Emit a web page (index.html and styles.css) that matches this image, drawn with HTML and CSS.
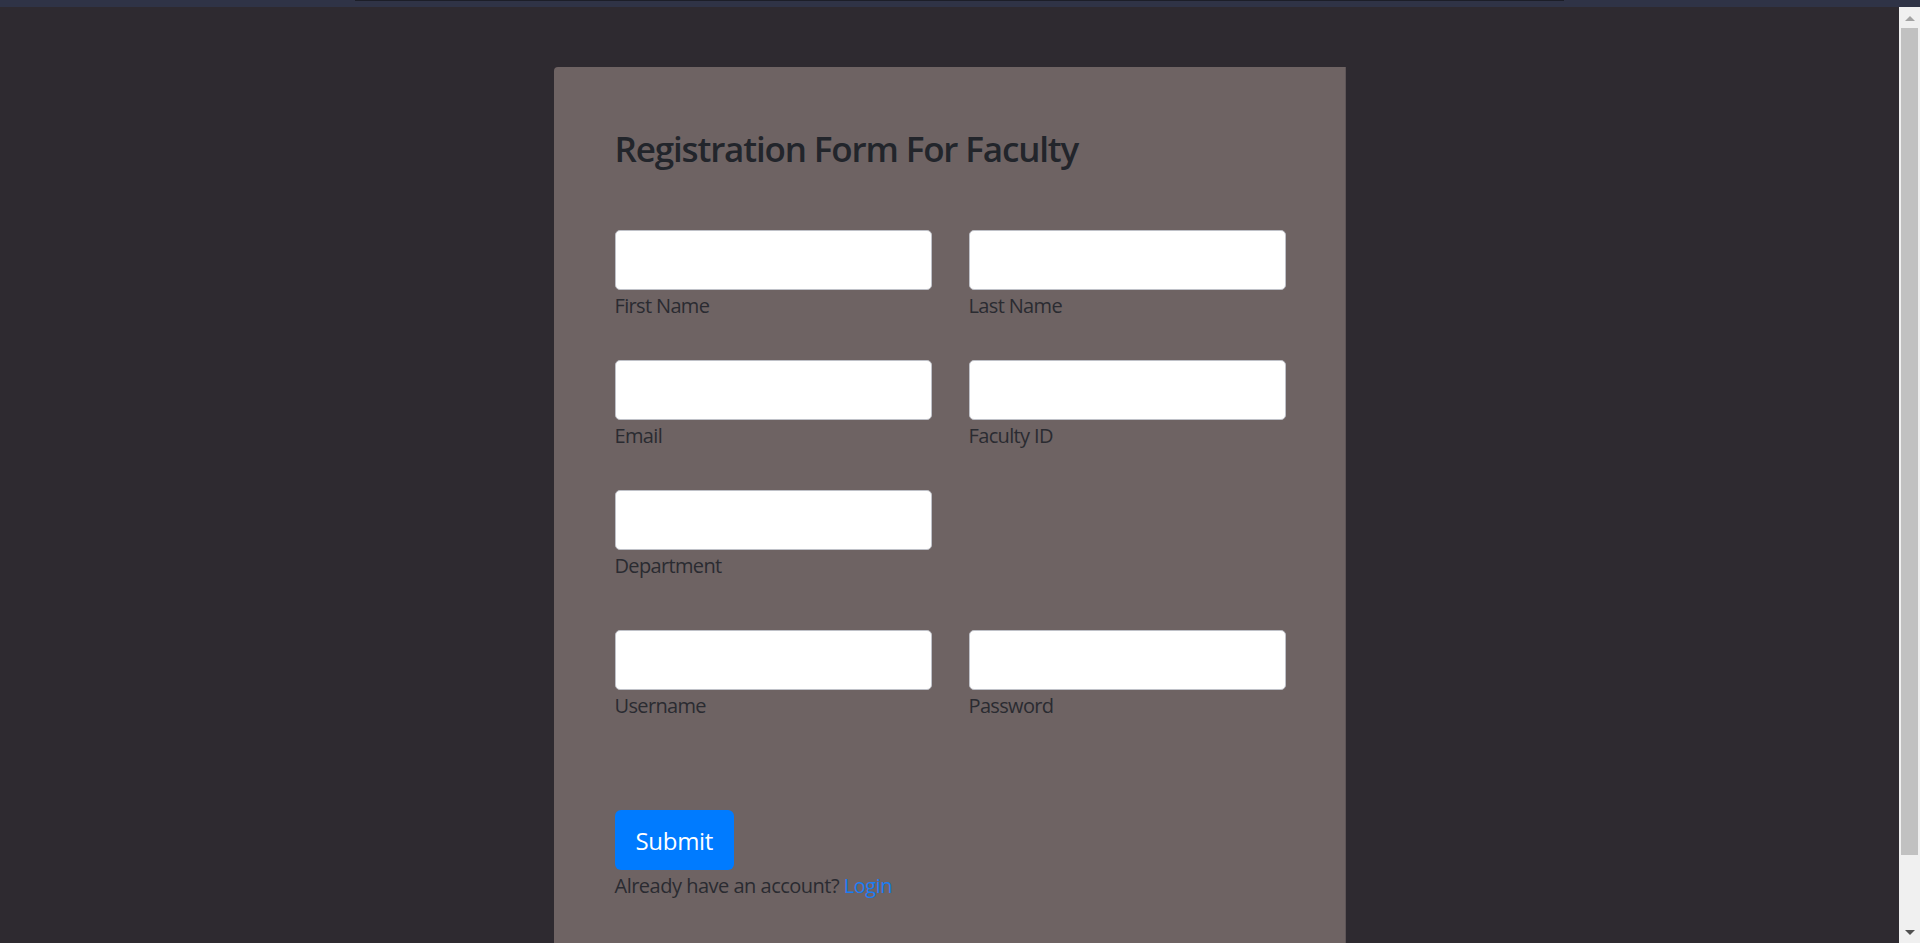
FILE: index.html
```html
<!DOCTYPE html>
<html lang="en">
<head>
<meta charset="utf-8">
<title>Registration Form For Faculty</title>
<link rel="stylesheet" href="styles.css">
</head>
<body>
<div class="topbar"><div class="topline"></div></div>
<div class="viewport">
  <main class="main">
    <section class="card">
      <h2 class="title">Registration Form For Faculty</h2>
      <form class="form">
        <div class="row">
          <div class="field"><input class="input" type="text"><label class="label">First Name</label></div>
          <div class="field"><input class="input" type="text"><label class="label">Last Name</label></div>
        </div>
        <div class="row">
          <div class="field"><input class="input" type="email"><label class="label">Email</label></div>
          <div class="field"><input class="input" type="text"><label class="label">Faculty ID</label></div>
        </div>
        <div class="row">
          <div class="field"><input class="input" type="text"><label class="label">Department</label></div>
        </div>
        <div class="row row-account">
          <div class="field"><input class="input" type="text"><label class="label">Username</label></div>
          <div class="field"><input class="input" type="password"><label class="label">Password</label></div>
        </div>
        <button class="submit" type="button">Submit</button>
        <p class="already">Already have an account? <a class="login" href="#">Login</a></p>
      </form>
    </section>
  </main>
  <div class="scrollbar">
    <div class="arrow-up"></div>
    <div class="thumb"></div>
    <div class="arrow-down"></div>
  </div>
</div>
</body>
</html>
```

FILE: styles.css
```css
* { box-sizing: border-box; }
html, body { margin: 0; padding: 0; }
body {
  width: 1920px;
  height: 943px;
  overflow: hidden;
  background: #2e2a30;
  font-family: "Open Sans", "Noto Sans", "Liberation Sans", sans-serif;
  color: #212529;
}
.topbar {
  height: 7px;
  background: #2f3346;
}
.topline {
  margin-left: 355px;
  width: 1209px;
  height: 1px;
  background: #1c1e28;
}
.viewport {
  display: flex;
  height: 936px;
}
.main {
  flex: 1;
  overflow: hidden;
  padding-top: 60px;
  display: flex;
  justify-content: center;
}
.card {
  width: 792px;
  height: 1000px;
  background: #6e6363;
  border-top-left-radius: 4px;
  border-right: 1px solid #5e5557;
  padding: 61px 59px 0 61px;
}
.title {
  margin: 0;
  font-size: 35px;
  line-height: 42px;
  font-weight: 600;
  color: #22252b;
  letter-spacing: -1.15px;
}
.form {
  margin-top: 60px;
  display: flex;
  flex-direction: column;
  align-items: flex-start;
}
.row {
  display: grid;
  grid-template-columns: 317px 317px;
  column-gap: 37px;
  margin-bottom: 39px;
}
.row-account { margin-top: 10px; margin-bottom: 89px; }
.field {
  display: flex;
  flex-direction: column;
}
.input {
  height: 60px;
  width: 317px;
  background: #fff;
  border: 1px solid #bfc1c8;
  border-radius: 5px;
  margin: 0;
  padding: 0 15px;
  font: inherit;
}
.label {
  padding-top: 1px;
  font-size: 20px;
  line-height: 30px;
  color: #2a2b31;
  letter-spacing: -0.65px;
}
.submit {
  height: 60px;
  padding: 0 21px;
  border: 0;
  border-radius: 6px;
  background: #007bff;
  color: #fff;
  font-family: inherit;
  font-size: 24px;
  letter-spacing: -0.3px;
}
.already {
  margin: 0;
  padding-top: 1px;
  font-size: 20px;
  line-height: 30px;
  color: #2a2b31;
  letter-spacing: -0.5px;
}
.login {
  color: #1a7cf5;
  text-decoration: none;
}
.scrollbar {
  width: 21px;
  height: 936px;
  background: #f0f0f0;
  display: flex;
  flex-direction: column;
  align-items: center;
}
.arrow-up {
  margin-top: 9px;
  width: 0;
  height: 0;
  border-left: 5px solid transparent;
  border-right: 5px solid transparent;
  border-bottom: 5px solid #a3a3a3;
}
.thumb {
  margin-top: 7px;
  width: 17px;
  height: 827px;
  background: #c1c1c1;
}
.arrow-down {
  margin-top: 75px;
  width: 0;
  height: 0;
  border-left: 5px solid transparent;
  border-right: 5px solid transparent;
  border-top: 5px solid #505050;
}
```
